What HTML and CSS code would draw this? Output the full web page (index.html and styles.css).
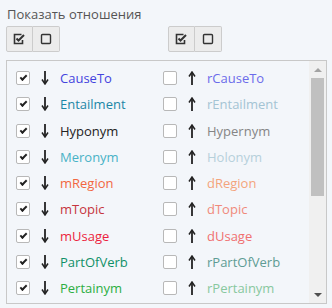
FILE: index.html
```html
<!DOCTYPE html>
<html lang="ru">
<head>
  <meta charset="UTF-8">
  <meta name="viewport" content="width=device-width, initial-scale=1.0">
  <title>Показать отношения</title>
  <link rel="stylesheet" href="styles.css">
</head>
<body>
  <div class="panel">
    <div class="title">Показать отношения</div>

    <div class="toolbar">
      <div class="btn-group">
        <button class="btn" title="Выбрать все">
          <svg width="13" height="12" viewBox="0 0 13 12"><path d="M8.5 1.5H1.5V10.5H9.5V7" fill="none" stroke="#333" stroke-width="1.6"/><path d="M3.5 5.5L5.5 7.5L11 2" fill="none" stroke="#333" stroke-width="2"/></svg>
        </button>
        <button class="btn" title="Снять все">
          <svg width="12" height="12" viewBox="0 0 12 12"><rect x="1.5" y="1.5" width="9" height="9" rx="1" fill="none" stroke="#333" stroke-width="1.4"/></svg>
        </button>
      </div>
      <div class="btn-group">
        <button class="btn" title="Выбрать все">
          <svg width="13" height="12" viewBox="0 0 13 12"><path d="M8.5 1.5H1.5V10.5H9.5V7" fill="none" stroke="#333" stroke-width="1.6"/><path d="M3.5 5.5L5.5 7.5L11 2" fill="none" stroke="#333" stroke-width="2"/></svg>
        </button>
        <button class="btn" title="Снять все">
          <svg width="12" height="12" viewBox="0 0 12 12"><rect x="1.5" y="1.5" width="9" height="9" rx="1" fill="none" stroke="#333" stroke-width="1.4"/></svg>
        </button>
      </div>
    </div>

    <div class="list-box">
      <div class="rel-list" id="relList"></div>
      <div class="scrollbar">
        <div class="sb-btn"><span class="tri-up"></span></div>
        <div class="sb-track"><div class="sb-thumb"></div></div>
        <div class="sb-btn"><span class="tri-down"></span></div>
      </div>
    </div>
  </div>

  <script>
    // [down name, colour, up name, colour]
    var relations = [
      ['CauseTo', '#4343de', 'rCauseTo', '#6b6bea'],
      ['Entailment', '#1c86a6', 'rEntailment', '#a4c4d4'],
      ['Hyponym', '#222222', 'Hypernym', '#858585'],
      ['Meronym', '#48b2c6', 'Holonym', '#b6d0da'],
      ['mRegion', '#f2663f', 'dRegion', '#f4a47c'],
      ['mTopic', '#c6343e', 'dTopic', '#f08a7a'],
      ['mUsage', '#ec1f3e', 'dUsage', '#f07070'],
      ['PartOfVerb', '#109068', 'rPartOfVerb', '#5e9c94'],
      ['Pertainym', '#2cae42', 'rPertainym', '#88c89e']
    ];

    var down = '<svg class="arrow" width="8" height="14" viewBox="0 0 8 14"><path d="M4 0V12" stroke="#222" stroke-width="1.8"/><path d="M1 8.5L4 13L7 8.5" fill="none" stroke="#222" stroke-width="1.5"/></svg>';
    var up = '<svg class="arrow" width="8" height="14" viewBox="0 0 8 14"><path d="M4 2V14" stroke="#222" stroke-width="1.8"/><path d="M1 5.5L4 1L7 5.5" fill="none" stroke="#222" stroke-width="1.5"/></svg>';

    var html = '';
    relations.forEach(function (r) {
      html += '<label class="rel"><span class="cb on"></span>' + down +
        '<span class="name" style="color:' + r[1] + '">' + r[0] + '</span></label>';
      html += '<label class="rel"><span class="cb"></span>' + up +
        '<span class="name" style="color:' + r[3] + '">' + r[2] + '</span></label>';
    });
    document.getElementById('relList').innerHTML = html;
  </script>
</body>
</html>
```

FILE: styles.css
```css
body {
  margin: 0;
  background-color: #f3f6fa;
  font-family: 'Open Sans', 'Liberation Sans', sans-serif;
  font-size: 13px;
  color: #333;
}
.panel {
  padding: 5px 6px 0 6px;
}
.title {
  color: #555;
  line-height: 18px;
  padding-left: 1px;
}
.toolbar {
  display: flex;
  gap: 108px;
  margin-top: 3px;
}
.btn-group {
  display: flex;
}
.btn {
  width: 27px;
  height: 26px;
  padding: 0;
  margin: 0;
  background-color: #ececec;
  border: 1px solid #cccccc;
  display: flex;
  align-items: center;
  justify-content: center;
  cursor: pointer;
}
.btn:first-child {
  border-radius: 2px 0 0 2px;
}
.btn + .btn {
  border-left: none;
  border-radius: 0 2px 2px 0;
}
.list-box {
  margin-top: 8px;
  width: 319px;
  height: 242px;
  border: 1px solid #c8c8c8;
  display: flex;
}
.rel-list {
  flex: 1;
  overflow: hidden;
  display: grid;
  grid-template-columns: 147px 147px;
  grid-auto-rows: 26.25px;
  padding: 4px 0 0 9px;
}
.scrollbar {
  width: 17px;
  background-color: #f0f0f0;
  display: flex;
  flex-direction: column;
}
.sb-btn {
  height: 17px;
  display: flex;
  align-items: center;
  justify-content: center;
}
.tri-up {
  border-left: 4px solid transparent;
  border-right: 4px solid transparent;
  border-bottom: 4px solid #a3a3a3;
}
.tri-down {
  border-left: 4px solid transparent;
  border-right: 4px solid transparent;
  border-top: 4px solid #505050;
}
.sb-track {
  flex: 1;
  padding: 0 2px;
}
.sb-thumb {
  height: 118px;
  background-color: #c0c0c0;
}
.rel {
  display: flex;
  align-items: center;
  cursor: pointer;
  white-space: nowrap;
}
.cb {
  width: 12px;
  height: 12px;
  border: 1px solid #b8b8b8;
  border-radius: 2px;
  background-color: #fff;
  position: relative;
  flex: none;
}
.cb.on::after {
  content: '';
  position: absolute;
  left: 3px;
  top: 3px;
  width: 5px;
  height: 2px;
  border-left: 2px solid #222;
  border-bottom: 2px solid #222;
  transform: rotate(-45deg);
}
.arrow {
  margin-left: 11px;
  flex: none;
}
.name {
  margin-left: 11px;
}
```
